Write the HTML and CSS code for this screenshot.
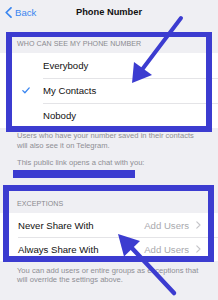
FILE: index.html
```html
<!DOCTYPE html>
<html>
<head>
<meta charset="utf-8">
<link rel="stylesheet" href="styles.css">
</head>
<body>
<div class="screen">
  <header class="nav">
    <a class="back">
      <svg class="back-chev" width="7" height="11" viewBox="0 0 7 11"><path d="M6 0.8 L1.2 5.5 L6 10.2" fill="none" stroke="#3a86f0" stroke-width="1.7" stroke-linecap="round" stroke-linejoin="round"/></svg>
      <span>Back</span>
    </a>
    <h1 class="title">Phone Number</h1>
  </header>

  <div class="sec-head sec-head-1">WHO CAN SEE MY PHONE NUMBER</div>
  <ul class="list">
    <li class="row row-opt"><span class="check"></span><span class="label">Everybody</span></li>
    <li class="row row-opt"><span class="check"><svg width="8" height="7" viewBox="0 0 8 7"><path d="M0.8 3.6 L2.9 5.8 L7.2 0.9" fill="none" stroke="#3a86f0" stroke-width="1.3" stroke-linecap="round" stroke-linejoin="round"/></svg></span><span class="label">My Contacts</span></li>
    <li class="row row-opt"><span class="check"></span><span class="label">Nobody</span></li>
  </ul>
  <p class="sec-foot sec-foot-1">Users who have your number saved in their contacts will also see it on Telegram.</p>
  <p class="sec-foot link-note">This public link opens a chat with you:</p>
  <div class="redact"></div>

  <div class="sec-head sec-head-2">EXCEPTIONS</div>
  <ul class="list">
    <li class="row row-ex"><span class="label">Never Share With</span><span class="value">Add Users</span><svg class="chev" width="5" height="8" viewBox="0 0 5 8"><path d="M0.8 0.8 L4 4 L0.8 7.2" fill="none" stroke="#c4c4c8" stroke-width="1.1" stroke-linecap="round" stroke-linejoin="round"/></svg></li>
    <li class="row row-ex"><span class="label">Always Share With</span><span class="value">Add Users</span><svg class="chev" width="5" height="8" viewBox="0 0 5 8"><path d="M0.8 0.8 L4 4 L0.8 7.2" fill="none" stroke="#c4c4c8" stroke-width="1.1" stroke-linecap="round" stroke-linejoin="round"/></svg></li>
  </ul>
  <p class="sec-foot sec-foot-2">You can add users or entire groups as exceptions that will override the settings above.</p>

  <div class="hl hl-1"></div>
  <div class="hl hl-2"></div>
  <svg class="arrows" width="218" height="300" viewBox="0 0 218 300">
    <line x1="181" y1="18" x2="141" y2="71" stroke="#3c3cd0" stroke-width="4" stroke-linecap="round"/>
    <polygon points="132,83 134,62 152,75" fill="#3c3cd0"/>
    <line x1="174" y1="293" x2="130" y2="246" stroke="#3c3cd0" stroke-width="4.5" stroke-linecap="round"/>
    <polygon points="118,234 140,241 124,256.5" fill="#3c3cd0"/>
  </svg>
</div>
</body>
</html>
```

FILE: styles.css
```css
* { box-sizing: border-box; }
html, body { margin: 0; padding: 0; }
body {
  background: #efeff3;
  font-family: "Liberation Sans", Arial, sans-serif;
  color: #111;
}
.screen {
  position: relative;
  width: 218px;
  height: 300px;
  overflow: hidden;
  background: #efeff3;
}
.nav {
  position: relative;
  height: 24px;
  display: flex;
  align-items: center;
  justify-content: center;
}
.back {
  position: absolute;
  left: 5px;
  top: 7px;
  display: flex;
  align-items: center;
  gap: 3px;
  color: #3a86f0;
  font-size: 9.6px;
  line-height: 11px;
}
.title {
  margin: 0;
  font-size: 9.3px;
  font-weight: 700;
  line-height: 11px;
  color: #111;
}
.sec-head {
  display: flex;
  align-items: flex-end;
  padding: 0 0 4px 17px;
  font-size: 7.1px;
  line-height: 9px;
  color: #8a8a8f;
  letter-spacing: 0.05px;
}
.sec-head-1 { height: 29px; }
.sec-head-2 { height: 35px; }
.list {
  list-style: none;
  margin: 0;
  padding: 0;
  background: #fff;
}
.row {
  display: flex;
  align-items: center;
  font-size: 9.6px;
  color: #111;
  position: relative;
}
.row-opt { height: 25px; }
.row-ex { height: 24px; padding: 0 17px 0 18px; }
.row-opt + .row-opt::before {
  content: "";
  position: absolute;
  left: 43px; right: 0; top: 0;
  height: 1px;
  background: #e4e4e7;
}
.row-ex + .row-ex::before {
  content: "";
  position: absolute;
  left: 18px; right: 0; top: 0;
  height: 1px;
  background: #e4e4e7;
}
.check {
  width: 43px;
  display: flex;
  justify-content: flex-start;
  padding-left: 22px;
}
.check svg { display: block; }
.label { flex: 0 0 auto; }
.value {
  margin-left: auto;
  color: #a9a9ae;
}
.chev { margin-left: 7px; display: block; }
.sec-foot {
  margin: 0;
  padding: 0 12px 0 17px;
  font-size: 7.6px;
  line-height: 9.7px;
  color: #8e8e93;
}
.sec-foot-1 { padding-top: 3px; }
.link-note { padding-top: 8px; }
.redact {
  margin: 2px 0 0 13px;
  width: 122px;
  height: 8px;
  background: #3c3cd0;
}
.sec-foot-2 { padding-top: 5px; line-height: 9.3px; }
.hl {
  position: absolute;
  border: 6px solid #3c3cd0;
}
.hl-1 {
  left: 6px; top: 32px;
  width: 206px; height: 100px;
  border-top-width: 5px;
}
.hl-2 {
  left: 3px; top: 185px;
  width: 211px; height: 77px;
}
.arrows {
  position: absolute;
  left: 0; top: 0;
}
```
